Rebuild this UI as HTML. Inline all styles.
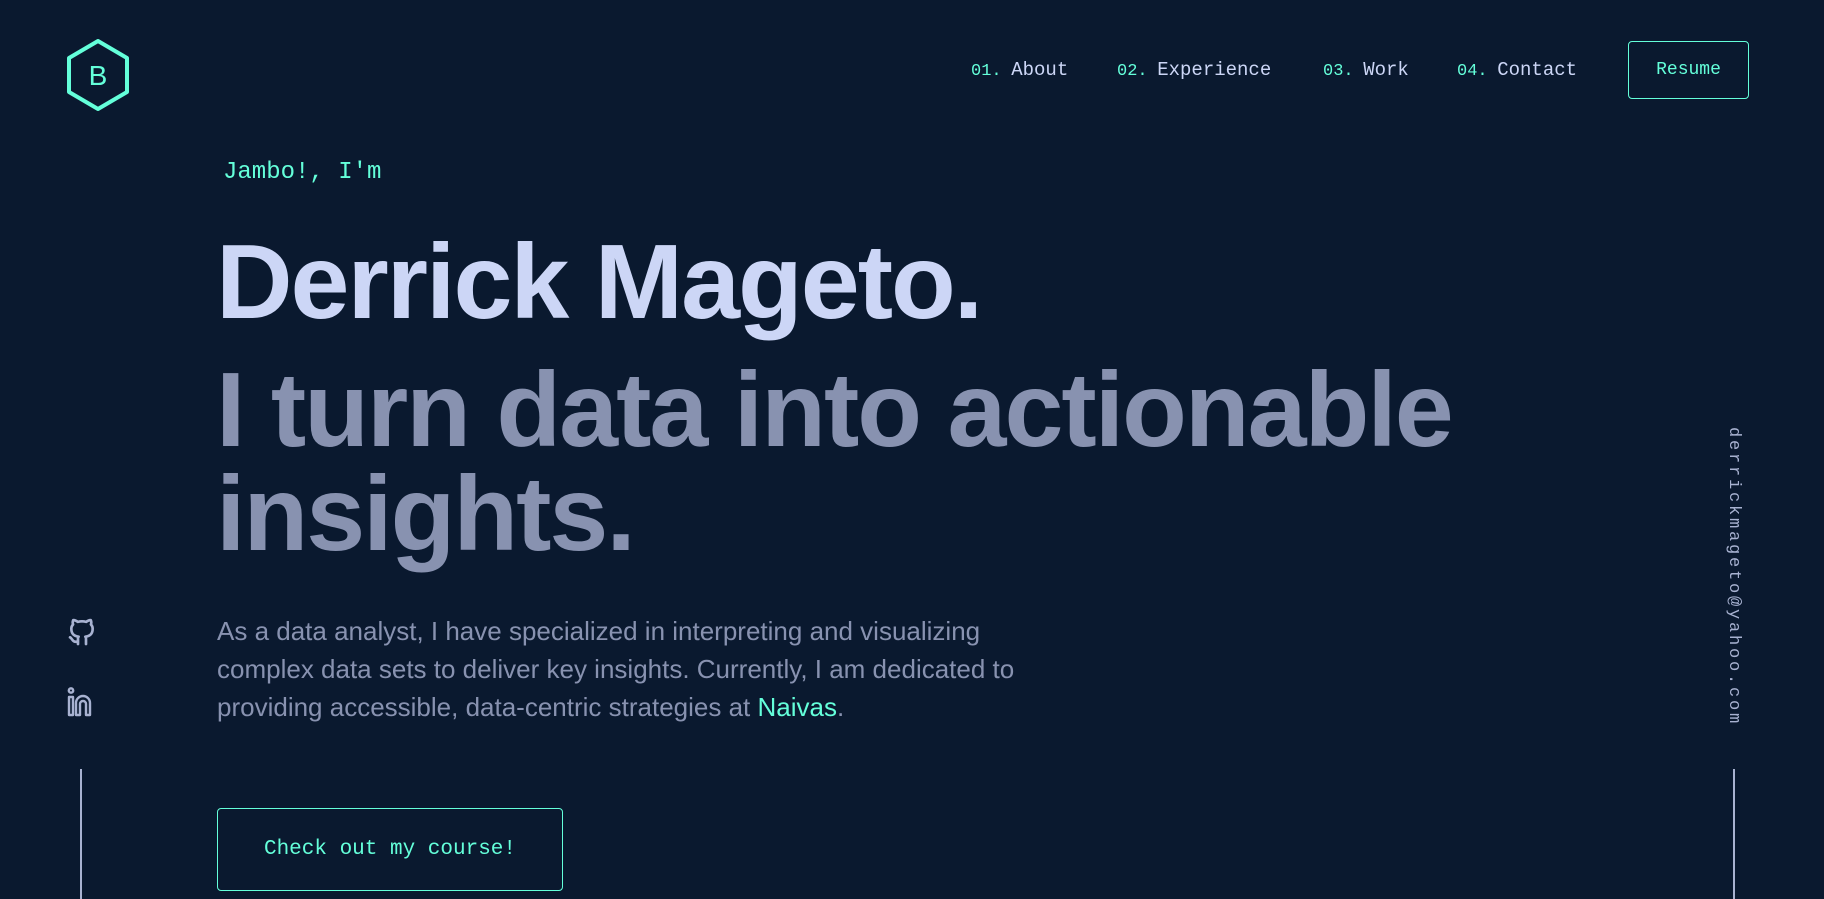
<!DOCTYPE html>
<html><head><meta charset="utf-8"><style>
html,body{margin:0;padding:0;width:1824px;height:899px;overflow:hidden;background:#0a192f;font-family:"Liberation Sans",sans-serif;}
.mono{font-family:"Liberation Mono",monospace;}
.abs{position:absolute;}
nav a{color:#ccd6f6;text-decoration:none;font-size:19px;}
nav span{color:#64ffda;font-size:17px;}
h1{margin:0;font-weight:bold;font-size:106px;letter-spacing:-2px;white-space:nowrap;}
</style></head><body>
<svg class="abs" style="left:66px;top:39px" width="64" height="72" viewBox="0 0 64 72">
<polygon points="32,2 61,19 61,53 32,70 3,53 3,19" fill="none" stroke="#64ffda" stroke-width="4" stroke-linejoin="round"/>
<text x="32" y="46" text-anchor="middle" fill="#64ffda" font-family="Liberation Sans" font-size="28">B</text>
</svg>
<nav class="mono">
<div class="abs" style="left:971px;top:59px"><span>01.</span> <a>About</a></div>
<div class="abs" style="left:1117px;top:59px"><span>02.</span> <a>Experience</a></div>
<div class="abs" style="left:1323px;top:59px"><span>03.</span> <a>Work</a></div>
<div class="abs" style="left:1457px;top:59px"><span>04.</span> <a>Contact</a></div>
</nav>
<div class="abs mono" style="left:1628px;top:41px;width:119px;height:56px;border:1.5px solid #64ffda;border-radius:4px;color:#64ffda;font-size:18px;display:flex;align-items:center;justify-content:center;">Resume</div>
<div class="abs mono" style="left:223px;top:159px;color:#64ffda;font-size:24px;">Jambo!, I'm</div>
<h1 class="abs" style="left:216px;top:222px;color:#ccd6f6;line-height:120px;">Derrick Mageto.</h1>
<h1 class="abs" style="left:216px;top:358px;color:#8892b0;line-height:104px;">I turn data into actionable<br>insights.</h1>
<div class="abs" style="left:217px;top:612px;color:#8892b0;font-size:26px;line-height:38px;white-space:nowrap;">As a data analyst, I have specialized in interpreting and visualizing<br>complex data sets to deliver key insights. Currently, I am dedicated to<br>providing accessible, data-centric strategies at <span style="color:#64ffda">Naivas</span>.</div>
<div class="abs mono" style="left:217px;top:808px;width:344px;height:81px;border:1.5px solid #64ffda;border-radius:4px;color:#64ffda;font-size:21px;display:flex;align-items:center;justify-content:center;">Check out my course!</div>
<svg class="abs" style="left:66px;top:616px" width="32" height="32" viewBox="0 0 24 24" fill="none" stroke="#a8b2d1" stroke-width="2" stroke-linecap="round" stroke-linejoin="round"><path d="M9 19c-4.3 1.4-4.3-2.5-6-3m12 5v-3.5c0-1 .1-1.4-.5-2 2.8-.3 5.5-1.4 5.5-6a4.6 4.6 0 0 0-1.3-3.2 4.2 4.2 0 0 0-.1-3.2s-1.1-.3-3.5 1.3a12.3 12.3 0 0 0-6.2 0C6.5 2.8 5.4 3.1 5.4 3.1a4.2 4.2 0 0 0-.1 3.2A4.6 4.6 0 0 0 4 9.5c0 4.6 2.7 5.7 5.5 6-.6.6-.6 1.2-.5 2V21"/></svg>
<svg class="abs" style="left:66px;top:687px" width="32" height="30" viewBox="0 0 32 30" fill="none" stroke="#a8b2d1" stroke-width="2.4" stroke-linejoin="round"><circle cx="5" cy="3.5" r="2.2"/><rect x="3" y="10" width="4" height="18"/><path d="M10 28V16a7 7 0 0 1 14 0v12h-4V17a3 3 0 0 0-6 0v11z"/></svg>
<div class="abs" style="left:80px;top:769px;width:2px;height:130px;background:#a8b2d1"></div>
<div class="abs mono" style="left:1724px;top:427px;color:#a8b2d1;font-size:17px;letter-spacing:2.8px;writing-mode:vertical-rl;">derrickmageto@yahoo.com</div>
<div class="abs" style="left:1733px;top:769px;width:2px;height:130px;background:#a8b2d1"></div>
</body></html>
